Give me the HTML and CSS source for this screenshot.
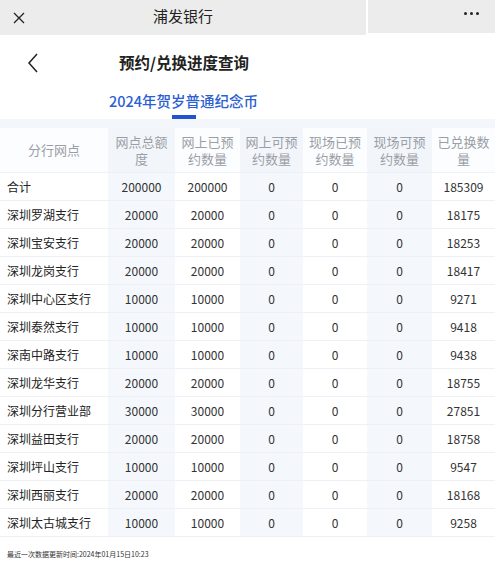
FILE: index.html
```html
<!DOCTYPE html>
<html lang="zh">
<head>
<meta charset="utf-8">
<link rel="stylesheet" href="styles.css">
</head>
<body>
<div class="topbar">
  <div class="bar-main">
    <svg class="close" width="12" height="12" viewBox="0 0 12 12"><path d="M1 1L11 11M11 1L1 11" stroke="#222" stroke-width="1.3" fill="none"/></svg>
    <div class="bar-title">浦发银行</div>
  </div>
  <div class="bar-capsule">
    <span class="dot"></span><span class="dot"></span><span class="dot"></span>
  </div>
</div>
<div class="head">
  <div class="nav">
    <svg class="back" width="12" height="20" viewBox="0 0 12 20"><path d="M10 1L2 10L10 19" stroke="#222" stroke-width="1.5" fill="none"/></svg>
    <div class="nav-title">预约/兑换进度查询</div>
  </div>
  <div class="tab">
    <div class="tab-text">2024年贺岁普通纪念币</div>
    <div class="tab-line"></div>
  </div>
</div>
<div class="band"></div>
<table class="grid">
  <colgroup>
    <col class="c1"><col class="c2"><col class="c3"><col class="c4"><col class="c5"><col class="c6"><col class="c7">
  </colgroup>
  <thead>
    <tr>
      <th class="name">分行网点</th>
      <th class="alt">网点总额度</th>
      <th>网上已预约数量</th>
      <th class="alt">网上可预约数量</th>
      <th>现场已预约数量</th>
      <th class="alt">现场可预约数量</th>
      <th>已兑换数量</th>
    </tr>
  </thead>
  <tbody>
    <tr><td class="name">合计</td><td class="alt">200000</td><td>200000</td><td class="alt">0</td><td>0</td><td class="alt">0</td><td>185309</td></tr>
    <tr><td class="name">深圳罗湖支行</td><td class="alt">20000</td><td>20000</td><td class="alt">0</td><td>0</td><td class="alt">0</td><td>18175</td></tr>
    <tr><td class="name">深圳宝安支行</td><td class="alt">20000</td><td>20000</td><td class="alt">0</td><td>0</td><td class="alt">0</td><td>18253</td></tr>
    <tr><td class="name">深圳龙岗支行</td><td class="alt">20000</td><td>20000</td><td class="alt">0</td><td>0</td><td class="alt">0</td><td>18417</td></tr>
    <tr><td class="name">深圳中心区支行</td><td class="alt">10000</td><td>10000</td><td class="alt">0</td><td>0</td><td class="alt">0</td><td>9271</td></tr>
    <tr><td class="name">深圳泰然支行</td><td class="alt">10000</td><td>10000</td><td class="alt">0</td><td>0</td><td class="alt">0</td><td>9418</td></tr>
    <tr><td class="name">深南中路支行</td><td class="alt">10000</td><td>10000</td><td class="alt">0</td><td>0</td><td class="alt">0</td><td>9438</td></tr>
    <tr><td class="name">深圳龙华支行</td><td class="alt">20000</td><td>20000</td><td class="alt">0</td><td>0</td><td class="alt">0</td><td>18755</td></tr>
    <tr><td class="name">深圳分行营业部</td><td class="alt">30000</td><td>30000</td><td class="alt">0</td><td>0</td><td class="alt">0</td><td>27851</td></tr>
    <tr><td class="name">深圳益田支行</td><td class="alt">20000</td><td>20000</td><td class="alt">0</td><td>0</td><td class="alt">0</td><td>18758</td></tr>
    <tr><td class="name">深圳坪山支行</td><td class="alt">10000</td><td>10000</td><td class="alt">0</td><td>0</td><td class="alt">0</td><td>9547</td></tr>
    <tr><td class="name">深圳西丽支行</td><td class="alt">20000</td><td>20000</td><td class="alt">0</td><td>0</td><td class="alt">0</td><td>18168</td></tr>
    <tr><td class="name">深圳太古城支行</td><td class="alt">10000</td><td>10000</td><td class="alt">0</td><td>0</td><td class="alt">0</td><td>9258</td></tr>
  </tbody>
</table>
<div class="footer">最近一次数据更新时间:2024年01月15日10:23</div>
</body>
</html>
```
FILE: styles.css
```css
* { box-sizing: border-box; }
html, body { margin: 0; padding: 0; background: #fff; }
body {
  width: 500px;
  font-family: "Noto Sans CJK SC", "Noto Sans", sans-serif;
  color: #333;
}
.topbar {
  display: flex;
  align-items: flex-start;
  height: 35px;
}
.bar-main {
  width: 366px;
  height: 35px;
  background: #ececec;
  display: flex;
  align-items: center;
  position: relative;
}
.close { margin-left: 13px; }
.bar-title {
  position: absolute;
  left: 0;
  width: 366px;
  text-align: center;
  font-size: 15px;
  color: #222;
  top: 6px;
  line-height: 20px;
}
.bar-capsule {
  margin-left: 2px;
  width: 127px;
  height: 33px;
  background: #ececec;
  display: flex;
  align-items: center;
  justify-content: flex-end;
  gap: 3px;
  padding-right: 16px;
  padding-bottom: 7px;
}
.dot {
  width: 3px; height: 3px; border-radius: 50%; background: #222;
}
.head { width: 366px; }
.nav {
  height: 55px;
  display: flex;
  align-items: center;
  position: relative;
}
.back { margin-left: 27px; margin-top: 0; }
.nav-title {
  position: absolute;
  left: 0; width: 368px;
  text-align: center;
  font-size: 15.5px;
  font-weight: 700;
  color: #222;
  top: 16px;
  line-height: 22px;
}
.tab {
  display: flex;
  flex-direction: column;
  align-items: center;
  padding-top: 1px;
  padding-left: 1px;
}
.tab-text {
  font-size: 14.5px;
  line-height: 20px;
  color: #2c5fd2;
  font-weight: 500;
}
.tab-line {
  margin-top: 4px;
  width: 24px;
  height: 4px;
  background: #2453cf;
}
.band {
  height: 9px;
  width: 495px;
  background: #f3f7fb;
}
.grid {
  width: 495px;
  border-collapse: collapse;
  table-layout: fixed;
}
.c1 { width: 108px; }
.c2 { width: 67px; }
.c3 { width: 65px; }
.c4 { width: 63px; }
.c5 { width: 64px; }
.c6 { width: 65px; }
.c7 { width: 63px; }
.grid th {
  height: 44px;
  font-size: 13px;
  line-height: 17px;
  font-weight: 400;
  color: #9a9ea6;
  text-align: center;
  padding: 0 4px;
  background: #fcfdfe;
  border-bottom: 1px solid #eef1f5;
}
.grid th.alt { background: #f2f6fb; }
.grid td {
  height: 28px;
  font-size: 12px;
  text-align: center;
  color: #333;
  padding: 0;
  border-bottom: 1px solid #eef0f3;
}
.grid .alt { background: #f4f8fc; }
.grid td.name {
  text-align: left;
  padding-left: 7px;
  color: #222;
}
.footer {
  padding: 12px 0 0 7px;
  font-size: 7px;
  line-height: 10px;
  color: #333;
}
```
